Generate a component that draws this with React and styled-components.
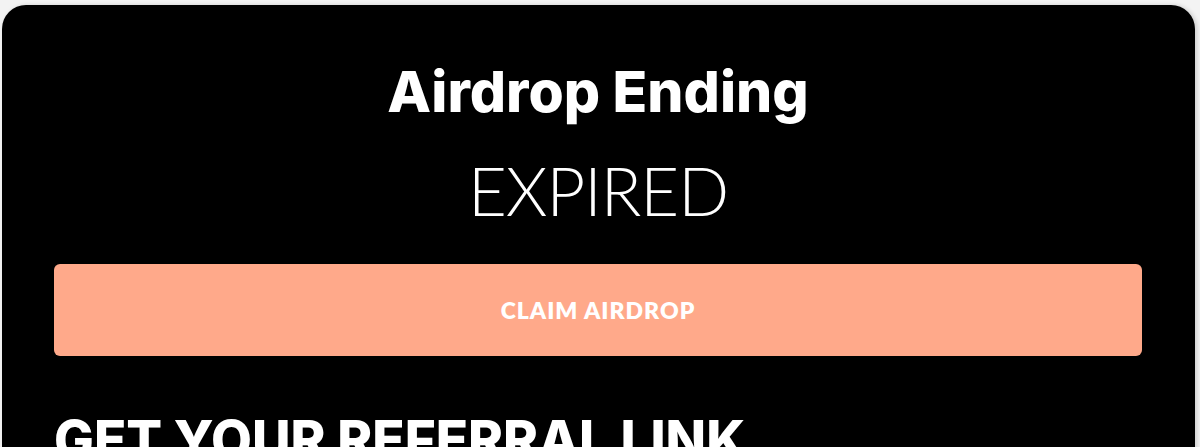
import styled, { createGlobalStyle } from "styled-components";

const Global = createGlobalStyle`
  html, body {
    margin: 0;
    padding: 0;
    background: #f3f3f3;
  }
  body {
    padding: 5px 5px 0 2px;
    overflow: hidden;
  }
`;

function App() {
  return (
    <>
      <Global />
      <Card>
        <Heading>Airdrop Ending</Heading>
        <Countdown>EXPIRED</Countdown>
        <ClaimButton>CLAIM AIRDROP</ClaimButton>
        <SectionTitle>GET YOUR REFERRAL LINK</SectionTitle>
      </Card>
    </>
  );
}

export default App;

const Card = styled.div`
  background: #000000;
  border-radius: 24px;
  padding: 49px 53px 40px 52px;
  box-shadow: 2px 0 4px rgba(0, 0, 0, 0.15);
  display: flex;
  flex-direction: column;
  align-items: stretch;
  min-height: 600px;
`;

const Heading = styled.h1`
  margin: 0;
  font-family: Inter, "Liberation Sans", sans-serif;
  font-weight: 800;
  font-size: 57px;
  line-height: 76px;
  color: #ffffff;
  text-align: center;
`;

const Countdown = styled.div`
  margin-top: 10px;
  font-family: Lato, "Open Sans", sans-serif;
  font-weight: 300;
  font-size: 67px;
  letter-spacing: -1px;
  line-height: 100px;
  color: #ffffff;
  text-align: center;
`;

const ClaimButton = styled.button`
  margin-top: 24px;
  height: 92px;
  border: none;
  border-radius: 6px;
  background: #ffa98a;
  color: #ffffff;
  font-family: Lato, "Open Sans", sans-serif;
  font-weight: 800;
  font-size: 23px;
  letter-spacing: 1px;
  cursor: pointer;
`;

const SectionTitle = styled.h2`
  margin: 54px 0 0;
  font-family: Inter, "Liberation Sans", sans-serif;
  font-weight: 800;
  font-size: 53px;
  line-height: 60px;
  color: #ffffff;
  text-align: left;
`;
